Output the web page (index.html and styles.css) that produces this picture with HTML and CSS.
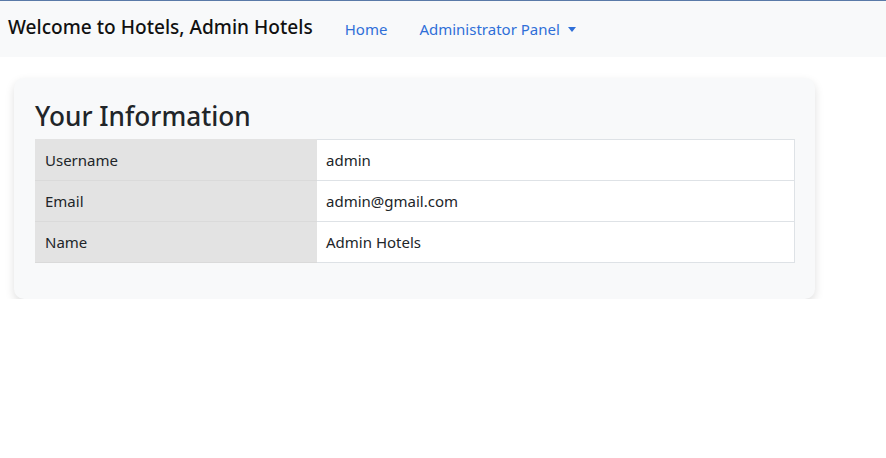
FILE: index.html
```html
<!DOCTYPE html>
<html>
<head>
<meta charset="utf-8">
<link rel="stylesheet" href="styles.css">
</head>
<body>
<nav class="navbar">
  <span class="brand">Welcome to Hotels, Admin Hotels</span>
  <ul class="nav">
    <li><a class="nav-link" href="#">Home</a></li>
    <li><a class="nav-link dropdown" href="#">Administrator Panel <span class="caret"></span></a></li>
  </ul>
</nav>
<main class="content">
  <section class="card">
    <h2 class="title">Your Information</h2>
    <table class="info">
      <tr><th>Username</th><td>admin</td></tr>
      <tr><th>Email</th><td>admin@gmail.com</td></tr>
      <tr><th>Name</th><td>Admin Hotels</td></tr>
    </table>
  </section>
</main>
</body>
</html>
```
FILE: styles.css
```css
* { box-sizing: border-box; }
html, body { margin: 0; padding: 0; }
body {
  font-family: "Noto Sans", "Open Sans", sans-serif;
  color: #212529;
  background: #fff;
  font-size: 15px;
}
.navbar {
  display: flex;
  align-items: center;
  height: 57px;
  background: #f8f9fa;
  border-top: 1px solid #5a7aa8;
  padding: 0 8px;
}
.brand {
  font-size: 19.1px;
  font-weight: 500;
  color: #111;
  margin-right: 16px;
  margin-top: -4px;
}
.nav {
  list-style: none;
  display: flex;
  margin: 0;
  padding: 0;
}
.nav-link {
  display: block;
  padding: 8px 16px;
  color: #2f6fd8;
  text-decoration: none;
  font-size: 15px;
}
.caret {
  display: inline-block;
  width: 0; height: 0;
  border-left: 4px solid transparent;
  border-right: 4px solid transparent;
  border-top: 5px solid #2f6fd8;
  vertical-align: 3px;
  margin-left: 4px;
}
.content {
  padding: 21px 71px 0 14px;
}
.card {
  background: #f8f9fa;
  border-radius: 10px;
  box-shadow: 0 4px 10px rgba(0,0,0,0.13);
  padding: 20px 20px 36px 21px;
}
.title {
  margin: 0 0 5px 0;
  font-size: 26.2px;
  font-weight: 500;
  line-height: 36px;
  color: #212529;
}
.info {
  width: 100%;
  border-collapse: collapse;
  font-size: 15px;
}
.info th, .info td {
  height: 41px;
  padding: 0 9px;
  text-align: left;
  font-weight: 400;
  border: 1px solid #dee2e6;
}
.info th {
  width: 281px;
  background: #e3e3e3;
  border-color: #e3e3e3;
  border-bottom-color: #dadada;
}
.info td {
  background: #fff;
}
```
